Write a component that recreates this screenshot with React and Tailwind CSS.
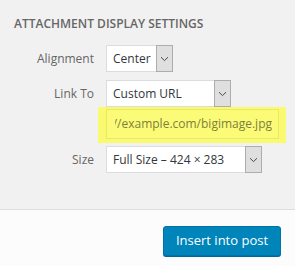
import React from 'react';

function Chevron() {
  return (
    <svg width="9" height="6" viewBox="0 0 9 6" fill="none">
      <path d="M1 1.2 L4.5 4.6 L8 1.2" stroke="#4a4a4a" strokeWidth="1" />
    </svg>
  );
}

function Select({ value, width }) {
  return (
    <div className={`flex h-[27px] border-y border-l border-[#dcdcdc] bg-white ${width}`}>
      <div className="flex flex-1 items-center pl-[6px] text-[12px] text-[#32373c] whitespace-nowrap">{value}</div>
      <div className="flex w-[17px] items-center justify-center border border-[#adadad] bg-[#dfdfdf] -my-px">
        <Chevron />
      </div>
    </div>
  );
}

function Row({ label, children, className = '' }) {
  return (
    <div className={`flex items-center ${className}`}>
      <span className="w-[94px] text-right text-[12px] text-[#666]">{label}</span>
      <div className="ml-[12px]">{children}</div>
    </div>
  );
}

export default function App() {
  return (
    <div className="flex h-[266px] w-[295px] flex-col overflow-hidden bg-[#fcfcfc]" style={{ fontFamily: '"Open Sans", sans-serif' }}>
      <div className="h-[210px] shrink-0 border-b border-[#dddddd] bg-[#f1f1f1]">
        <h2 className="mt-[15px] pl-[14px] text-[12px] font-semibold uppercase leading-[18px] text-[#666]">
          Attachment Display Settings
        </h2>
        <Row label="Alignment" className="mt-[12px]">
          <Select value="Center" width="w-[67px]" />
        </Row>
        <Row label="Link To" className="mt-[8px]">
          <Select value="Custom URL" width="w-[125px]" />
        </Row>
        <div className="ml-[98px] w-[188px] bg-[#fafa70] pt-[2px] pb-[4px] pl-[8px]">
          <div className="flex h-[30px] w-[173px] items-center border border-[#e8e86a] bg-[#fbfb78] pl-[8px] pr-[6px]">
            <div className="flex flex-1 justify-end overflow-hidden whitespace-nowrap text-[12px] text-[#80803a]">
              <span>http://example.com/bigimage.jpg</span>
            </div>
          </div>
        </div>
        <Row label="Size" className="mt-[3px]">
          <Select value="Full Size – 424 × 283" width="w-[156px]" />
        </Row>
      </div>
      <div className="flex justify-end pr-[14px] pt-[16px]">
        <button className="h-[30px] w-[118px] rounded-[3px] border border-[#0073aa] bg-[#0085ba] text-[13px] text-white shadow-[0_1px_0_#006799]">
          Insert into post
        </button>
      </div>
    </div>
  );
}
